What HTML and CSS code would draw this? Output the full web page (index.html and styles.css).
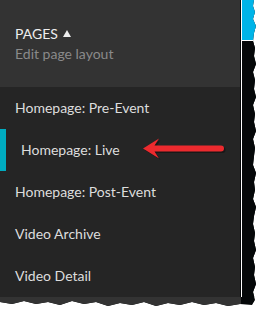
FILE: index.html
```html
<!DOCTYPE html>
<html lang="en">
<head>
  <meta charset="utf-8">
  <title>Pages menu</title>
  <link rel="stylesheet" href="styles.css">
</head>
<body>
  <div class="sheet">
    <div class="sheet__main">
      <nav class="panel">
        <header class="panel__head">
          <div class="panel__title">PAGES <span class="panel__caret"></span></div>
          <div class="panel__sub">Edit page layout</div>
        </header>
        <ul class="panel__list">
          <li class="panel__item">Homepage: Pre-Event</li>
          <li class="panel__item panel__item--active">Homepage: Live</li>
          <li class="panel__item">Homepage: Post-Event</li>
          <li class="panel__item">Video Archive</li>
          <li class="panel__item">Video Detail</li>
        </ul>
      </nav>
      <div class="side">
        <div class="side__top"></div>
        <div class="side__rest"></div>
      </div>
    </div>
    <div class="sheet__foot"></div>
    <svg class="pointer" width="90" height="26" viewBox="0 0 90 26" xmlns="http://www.w3.org/2000/svg">
      <path transform="translate(1.5 1.5)" fill="#000" opacity="0.35" d="M2 11.5 L18 1.5 L13.5 8.5 L80 8.5 A3 3 0 0 1 80 14.5 L13.5 14.5 L18 21.5 Z"/>
      <path fill="#ec2a2e" d="M2 11.5 L18 1.5 L13.5 8.5 L80 8.5 A3 3 0 0 1 80 14.5 L13.5 14.5 L18 21.5 Z"/>
    </svg>
  </div>
</body>
</html>
```

FILE: styles.css
```css
*, *::before, *::after {
  margin: 0;
  padding: 0;
  box-sizing: border-box;
}

html {
  font-family: "Lato", "Liberation Sans", sans-serif;
  font-size: 14px;
}

body {
  background-color: #FFFFFF;
}

.sheet {
  position: relative;
  width: 257px;
  height: 308px;
  background-color: #050809;
  clip-path: polygon(
    0 0, 254px 0, 253px 6px, 255px 12px, 253px 19px, 256px 26px, 254px 33px,
    253px 41px, 255px 48px, 254px 56px, 256px 64px, 253px 72px, 255px 80px,
    254px 89px, 256px 97px, 253px 105px, 255px 114px, 254px 122px, 256px 131px,
    253px 139px, 255px 148px, 254px 156px, 253px 165px, 256px 173px, 254px 182px,
    255px 190px, 253px 199px, 256px 207px, 254px 216px, 253px 224px, 255px 233px,
    254px 241px, 256px 250px, 253px 258px, 255px 267px, 254px 275px, 256px 284px,
    253px 292px, 255px 300px, 252px 305px,
    240px 304px, 228px 306px, 216px 303px, 204px 305px, 192px 302px, 180px 305px,
    168px 303px, 156px 306px, 144px 302px, 132px 305px, 120px 303px, 108px 306px,
    96px 302px, 84px 304px, 72px 301px, 60px 305px, 48px 302px, 36px 304px,
    24px 301px, 12px 304px, 0 302px
  );
}

.sheet__main {
  display: flex;
  height: 297px;
}

.sheet__foot {
  width: 241px;
  height: 11px;
  background-color: #333333;
}

.panel {
  width: 241px;
  background-color: #252525;
}

.panel__head {
  height: 87px;
  padding: 24px 15px 0;
  background-color: #333333;
  line-height: 20px;
}

.panel__title {
  color: #EEEEEE;
}

.panel__caret {
  display: inline-block;
  width: 0;
  height: 0;
  margin-left: 2px;
  border-left: 4px solid transparent;
  border-right: 4px solid transparent;
  border-bottom: 7px solid #EEEEEE;
  vertical-align: 2px;
}

.panel__sub {
  color: #8A8A8A;
}

.panel__list {
  list-style: none;
}

.panel__item {
  height: 42px;
  padding-left: 15px;
  line-height: 42px;
  color: #DDDDDD;
}

.panel__item--active {
  border-left: 6px solid #00ACC1;
}

.side {
  display: flex;
  flex-direction: column;
  width: 16px;
  margin-left: 1px;
  border-left: 1px solid #FFFFFF;
}

.side__top {
  height: 40px;
  background-color: #00B4E8;
}

.side__rest {
  flex: 1;
  border-top: 1px solid #FFFFFF;
  background-color: #050809;
}

.pointer {
  position: absolute;
  top: 137px;
  left: 141px;
}
```
